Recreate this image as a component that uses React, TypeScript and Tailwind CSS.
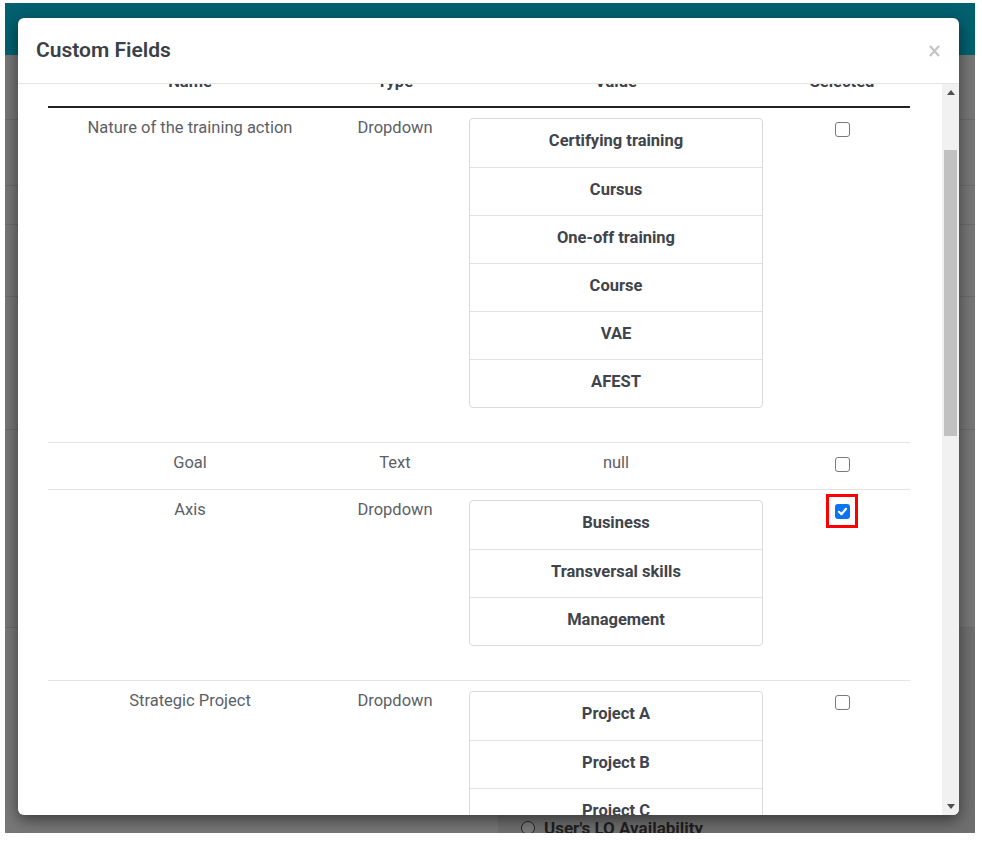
import React from 'react';

type Field = {
  name: string;
  type: string;
  values: string[] | null;
  checked: boolean;
};

const FIELDS: Field[] = [
  {
    name: 'Nature of the training action',
    type: 'Dropdown',
    values: ['Certifying training', 'Cursus', 'One-off training', 'Course', 'VAE', 'AFEST'],
    checked: false,
  },
  { name: 'Goal', type: 'Text', values: null, checked: false },
  { name: 'Axis', type: 'Dropdown', values: ['Business', 'Transversal skills', 'Management'], checked: true },
  { name: 'Strategic Project', type: 'Dropdown', values: ['Project A', 'Project B', 'Project C'], checked: false },
];

const COLS = 'grid grid-cols-[284px_126px_316px_136px]';

function Checkbox({ checked }: { checked: boolean }) {
  if (checked) {
    return (
      <span className="relative inline-flex w-[15px] h-[15px]">
        <span className="w-[15px] h-[15px] rounded-[3px] bg-[#0b74f5] flex items-center justify-center">
          <svg width="11" height="11" viewBox="0 0 11 11">
            <path d="M2 5.8 L4.4 8.2 L9 2.8" fill="none" stroke="#fff" strokeWidth="2.2" strokeLinecap="round" strokeLinejoin="round" />
          </svg>
        </span>
        {/* red highlight drawn on the screenshot */}
        <span className="absolute -left-[9px] -right-[8px] -top-[10px] -bottom-[9px] border-[3px] border-[#ff0000]" />
      </span>
    );
  }
  return <span className="w-[15px] h-[15px] rounded-[3px] border border-[#7a7a7a] bg-white" />;
}

function ValueList({ values }: { values: string[] }) {
  return (
    <div className="border border-[#dadada] rounded-[4px] overflow-hidden">
      {values.map((v, i) => (
        <div
          key={v}
          className={`h-[48px] pt-[10px] text-center leading-6 font-bold text-[#40444c] ${i > 0 ? 'border-t border-[#e2e2e2]' : ''}`}
        >
          {v}
        </div>
      ))}
    </div>
  );
}

function FieldRow({ field, first }: { field: Field; first: boolean }) {
  return (
    <div className={`${COLS} ${first ? '' : 'border-t border-[#e4e4e4]'}`}>
      <div className="text-center pt-[8px] leading-6 text-[#5c6068]">{field.name}</div>
      <div className="text-center pt-[8px] leading-6 text-[#5c6068]">{field.type}</div>
      {field.values ? (
        <div className="px-[11px] pt-[10px] pb-[34px]">
          <ValueList values={field.values} />
        </div>
      ) : (
        <div className="text-center pt-[8px] pb-[14px] leading-6 text-[#5c6068]">null</div>
      )}
      <div className="flex items-start justify-center pt-[14px]">
        <Checkbox checked={field.checked} />
      </div>
    </div>
  );
}

function Scrollbar() {
  return (
    <div className="w-[17px] bg-[#f1f1f1] flex flex-col">
      <div className="h-[17px] flex items-center justify-center">
        <svg width="8" height="5" viewBox="0 0 8 5">
          <path d="M0 5 L4 0 L8 5 Z" fill="#505050" />
        </svg>
      </div>
      <div className="flex-1">
        <div className="mt-[49px] h-[286px] mx-[2px] bg-[#c1c1c1]" />
      </div>
      <div className="h-[17px] flex items-center justify-center">
        <svg width="8" height="5" viewBox="0 0 8 5">
          <path d="M0 0 L8 0 L4 5 Z" fill="#505050" />
        </svg>
      </div>
    </div>
  );
}

function CustomFieldsModal() {
  return (
    <div className="absolute left-[13px] top-[15px] w-[941px] h-[797px] bg-white rounded-[6px] overflow-hidden shadow-[0_5px_15px_rgba(0,0,0,0.5)] flex flex-col">
      {/* Header */}
      <div className="h-[66px] shrink-0 border-b border-[#e5e5e5] flex items-center justify-between pl-[18px] pr-[19px]">
        <h2 className="text-[21px] font-semibold text-[#3b3f47]">Custom Fields</h2>
        <button className="p-0">
          <svg width="11" height="12" viewBox="0 0 11 12">
            <path d="M1 1 L10 11 M10 1 L1 11" stroke="#c4c4c4" strokeWidth="2.2" />
          </svg>
        </button>
      </div>

      {/* Body (scrolled) */}
      <div className="flex-1 flex min-h-0">
        <div className="flex-1 overflow-hidden pl-[30px]">
          <div className="w-[862px] -mt-[14px]">
            <div className={`${COLS} border-b-2 border-[#222] font-bold text-[#3d4149] leading-6`}>
              <div className="text-center pb-[12px]">Name</div>
              <div className="text-center pb-[12px]">Type</div>
              <div className="text-center pb-[12px]">Value</div>
              <div className="text-center pb-[12px]">Selected</div>
            </div>
            {FIELDS.map((f, i) => (
              <FieldRow key={f.name} field={f} first={i === 0} />
            ))}
          </div>
        </div>
        <Scrollbar />
      </div>
    </div>
  );
}

export default function App() {
  return (
    <div className="w-[982px] h-[842px] bg-white pt-[3px] pl-[5px] font-['Roboto',sans-serif] text-[16.5px]">
      <div className="relative w-[970px] h-[830px] overflow-hidden bg-[#767676] flex flex-col">
        {/* dimmed page behind the dialog */}
        <div className="h-[52px] shrink-0 bg-[#02606f]" />
        <div className="h-[65px] shrink-0 border-b border-[#6a6a6a]" />
        <div className="h-[66px] shrink-0 border-b border-[#6a6a6a]" />
        <div className="h-[39px] shrink-0 border-b border-[#6a6a6a]" />
        <div className="h-[72px] shrink-0 border-b border-[#6a6a6a]" />
        <div className="h-[133px] shrink-0 border-b border-[#6a6a6a]" />
        <div className="h-[198px] shrink-0 border-b border-[#6a6a6a]" />
        <div className="flex-1 flex">
          <div className="w-[493px] bg-[#787878]" />
          <div className="flex-1 flex flex-col justify-end bg-[#6f6f6f]">
            <div className="h-[17px] flex items-start pl-[23px] gap-[9px]">
              <span className="w-[14px] h-[14px] mt-[5px] rounded-full border-[1.5px] border-[#262626] bg-[#7a7a7a] shrink-0" />
              <span className="font-bold text-[17px] leading-[20px] mt-[2px] text-[#1f1f1f] whitespace-nowrap">
                User's LO Availability
              </span>
            </div>
          </div>
        </div>

        <CustomFieldsModal />
      </div>
    </div>
  );
}
